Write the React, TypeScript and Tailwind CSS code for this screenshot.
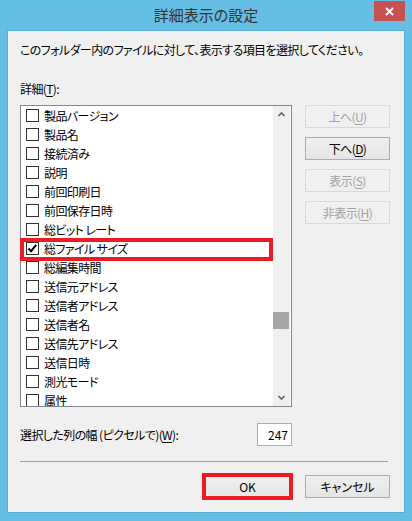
import React from "react";

const items = [
  "製品バージョン",
  "製品名",
  "接続済み",
  "説明",
  "前回印刷日",
  "前回保存日時",
  "総ビット レート",
  "総ファイル サイズ",
  "総編集時間",
  "送信元アドレス",
  "送信者アドレス",
  "送信者名",
  "送信先アドレス",
  "送信日時",
  "測光モード",
  "属性",
];

function Checkbox({ checked }: { checked?: boolean }) {
  return (
    <span className="w-[13px] h-[13px] border border-[#333333] bg-white flex items-center justify-center shrink-0">
      {checked && (
        <svg width="11" height="11" viewBox="0 0 11 11">
          <path d="M1.5 5.5 L4 8.2 L9.2 1.8" stroke="#000" strokeWidth="2" fill="none" />
        </svg>
      )}
    </span>
  );
}

function SideButton({ label, u, enabled }: { label: string; u: string; enabled?: boolean }) {
  return (
    <div
      className={
        enabled
          ? "w-[85px] h-[23px] flex items-center justify-center border border-[#acacac] bg-gradient-to-b from-[#f0f0f0] to-[#e5e5e5] text-[#000]"
          : "w-[85px] h-[23px] flex items-center justify-center border border-[#d9d9d9] bg-[#f0f0f0] text-[#a0a0a0]"
      }
    >
      <span>
        {label}(<span className="underline underline-offset-2">{u}</span>)
      </span>
    </div>
  );
}

export default function App() {
  return (
    <div className="w-[412px] h-[521px] bg-[#65bee3] flex flex-col font-['Noto_Sans_CJK_JP',sans-serif] [font-feature-settings:'palt'] text-[12px] leading-[16px] text-[#000]">
      <div className="relative h-[30px] flex items-center justify-center shrink-0">
        <span className="text-[15px] leading-[20px] text-[#333333]">詳細表示の設定</span>
        <div className="absolute right-[7px] top-[1px] w-[31px] h-[20px] bg-[#c75050] flex items-center justify-center">
          <svg width="9" height="9" viewBox="0 0 9 9">
            <path d="M1 1 L8 8 M8 1 L1 8" stroke="#ffffff" strokeWidth="2" fill="none" />
          </svg>
        </div>
      </div>
      <div className="mx-[7px] mb-[8px] flex-1 border border-[#58acd6] bg-[#f0f0f0] flex flex-col pl-[12px] pr-[14px] tracking-[-0.6px]">
        <div className="mt-[11px]">このフォルダー内のファイルに対して、表示する項目を選択してください。</div>
        <div className="mt-[23px]">
          詳細(<span className="underline underline-offset-2">T</span>):
        </div>
        <div className="mt-[8px] flex">
          <div className="relative w-[272px] h-[302px] border border-[#828790] bg-white flex">
            <div className="w-[252px] flex flex-col overflow-hidden">
              {items.map((t, i) => (
                <div key={t} className="h-[19px] shrink-0 flex items-center gap-[5px] pl-[5px]">
                  <Checkbox checked={i === 7} />
                  <span className="whitespace-nowrap">{t}</span>
                </div>
              ))}
            </div>
            <div className="w-[17px] bg-[#f0f0f0] flex flex-col">
              <div className="h-[17px] flex items-center justify-center">
                <svg width="7" height="5" viewBox="0 0 7 5">
                  <path d="M0.5 4 L3.5 1 L6.5 4" stroke="#606060" strokeWidth="1.6" fill="none" />
                </svg>
              </div>
              <div className="flex-1 pt-[189px]">
                <div className="h-[17px] w-[16px] bg-[#a6a6a6]" />
              </div>
              <div className="h-[17px] flex items-center justify-center">
                <svg width="7" height="5" viewBox="0 0 7 5">
                  <path d="M0.5 1 L3.5 4 L6.5 1" stroke="#606060" strokeWidth="1.6" fill="none" />
                </svg>
              </div>
            </div>
            <span className="absolute left-[-1px] top-[132px] w-[253px] h-[23px] border-[4px] border-[#ed1c24]" />
          </div>
          <div className="ml-[13px] flex flex-col gap-[9px]">
            <SideButton label="上へ" u="U" />
            <SideButton label="下へ" u="D" enabled />
            <SideButton label="表示" u="S" />
            <SideButton label="非表示" u="H" />
          </div>
        </div>
        <div className="mt-[16px] w-[272px] h-[23px] flex items-center justify-between">
          <span>
            選択した列の幅 (ピクセルで)(<span className="underline underline-offset-2">W</span>):
          </span>
          <div className="w-[35px] h-[23px] border border-[#abadb3] bg-white flex items-center justify-end pr-[3px] tracking-normal">
            247
          </div>
        </div>
        <div className="mt-[15px] w-[368px] h-px bg-[#a0a0a0]" />
        <div className="mt-[13px] flex justify-end gap-[15px] tracking-normal">
          <div className="relative w-[85px] h-[23px] flex items-center justify-center border border-[#acacac] bg-gradient-to-b from-[#f0f0f0] to-[#e5e5e5]">
            OK
            <span className="absolute left-[-4px] top-[-3px] w-[91px] h-[27px] border-[4px] border-[#ed1c24]" />
          </div>
          <div className="w-[85px] h-[23px] flex items-center justify-center border border-[#acacac] bg-gradient-to-b from-[#f0f0f0] to-[#e5e5e5]">
            キャンセル
          </div>
        </div>
      </div>
    </div>
  );
}
